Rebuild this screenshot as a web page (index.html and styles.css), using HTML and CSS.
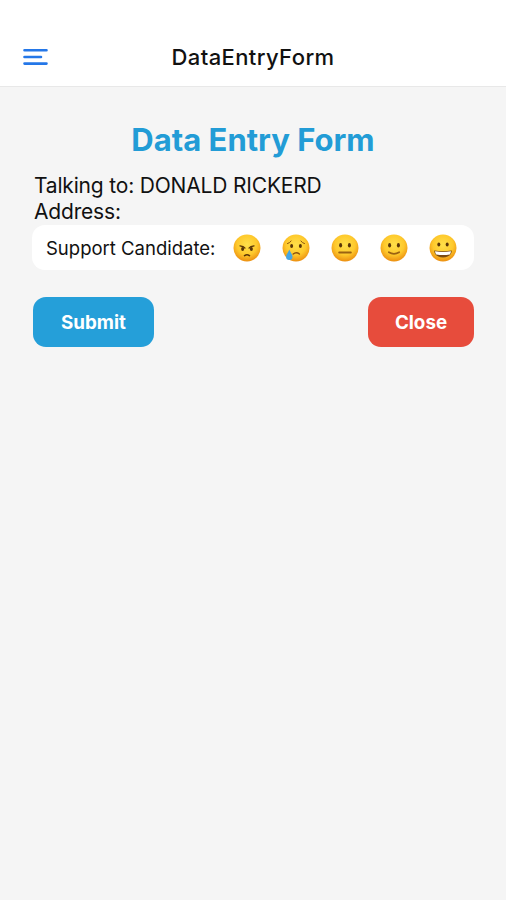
FILE: index.html
```html
<!DOCTYPE html>
<html lang="en">
<head>
    <meta charset="UTF-8">
    <title>DataEntryForm</title>
    <link rel="stylesheet" href="styles.css">
</head>
<body>
    <!-- shared gradient for the faces -->
    <svg class="defs" width="0" height="0">
        <defs>
            <radialGradient id="skin" cx="50%" cy="38%" r="62%">
                <stop offset="0" stop-color="#ffe04a"/>
                <stop offset="0.6" stop-color="#fec92c"/>
                <stop offset="1" stop-color="#ec8f10"/>
            </radialGradient>
        </defs>
    </svg>

    <header class="topbar">
        <button class="menu" aria-label="Menu">
            <svg width="25" height="18" viewBox="0 0 25 18" fill="none" stroke="#2477e8" stroke-width="2.6" stroke-linecap="round">
                <path d="M1.5 2.2h22M1.5 9h16.5M1.5 15.6h22"/>
            </svg>
        </button>
        <span class="topbar-title">DataEntryForm</span>
    </header>

    <main class="container">
        <h1>Data Entry Form</h1>
        <p class="info talking">Talking to: DONALD RICKERD</p>
        <p class="info address">Address:</p>

        <div class="support">
            <span class="support-label">Support Candidate:</span>
            <div class="faces">
                <svg class="face" viewBox="0 0 28 28">
                    <circle cx="14" cy="14" r="13.5" fill="url(#skin)"/>
                    <g fill="#5a3508">
                        <ellipse cx="9.6" cy="15" rx="1.5" ry="1.9"/>
                        <ellipse cx="18.4" cy="15" rx="1.5" ry="1.9"/>
                    </g>
                    <g fill="none" stroke="#5a3508" stroke-width="1.3" stroke-linecap="round">
                        <path d="M7 11.8q3.6.4 5 2.3M21 11.8q-3.6.4-5 2.3"/>
                        <path d="M11.6 21.6q2.4-1.7 4.8 0" stroke-width="1.7"/>
                    </g>
                </svg>
                <svg class="face" viewBox="0 0 28 28">
                    <circle cx="14" cy="14" r="13.5" fill="url(#skin)"/>
                    <g fill="#5a3508">
                        <ellipse cx="9.6" cy="12" rx="1.5" ry="2"/>
                        <ellipse cx="18.4" cy="12" rx="1.5" ry="2"/>
                    </g>
                    <g fill="none" stroke="#8a5310" stroke-width="1" stroke-linecap="round">
                        <path d="M5.5 9.6q2.4-.6 3.6-2.6M22.500 9.600q-2.400-.600-3.600-2.600"/>
                        <path d="M11.200 20q3-2.600 6.200 0" stroke-width="1.500"/>
                    </g>
                    <path d="M7.300 15.500c1 2.800 3.200 4.800 3.200 7.200a3.200 3.200 0 0 1-6.400 0c0-2.400 2.200-4.400 3.200-7.200z" fill="#45a6e6"/>
                </svg>
                <svg class="face" viewBox="0 0 28 28">
                    <circle cx="14" cy="14" r="13.5" fill="url(#skin)"/>
                    <g fill="#5a3508">
                        <ellipse cx="9.6" cy="11.2" rx="1.5" ry="2.2"/>
                        <ellipse cx="18.4" cy="11.2" rx="1.5" ry="2.2"/>
                    </g>
                    <path d="M8.2 18.5h11.6" stroke="#9a6212" stroke-width="2" stroke-linecap="round"/>
                </svg>
                <svg class="face" viewBox="0 0 28 28">
                    <circle cx="14" cy="14" r="13.5" fill="url(#skin)"/>
                    <g fill="#5a3508">
                        <ellipse cx="9.6" cy="11.2" rx="1.5" ry="2.2"/>
                        <ellipse cx="18.4" cy="11.2" rx="1.5" ry="2.2"/>
                    </g>
                    <path d="M8.800 18.200q5.200 3.200 10.400 0" fill="none" stroke="#9a6212" stroke-width="1.700" stroke-linecap="round"/>
                </svg>
                <svg class="face" viewBox="0 0 28 28">
                    <circle cx="14" cy="14" r="13.5" fill="url(#skin)"/>
                    <g fill="#5a3508">
                        <ellipse cx="9.8" cy="10.6" rx="1.5" ry="2"/>
                        <ellipse cx="18.2" cy="10.6" rx="1.5" ry="2"/>
                    </g>
                    <path d="M5.200 16.400q8.800 1.600 17.600 0c.3 4.200-3.800 7-8.800 7s-9.100-2.800-8.800-7z" fill="#7a4a12"/>
                    <path d="M6 17.200q8 1.400 16 0-.2 1.900-1.200 3.200-6.800 1-13.600 0-1-1.300-1.200-3.200z" fill="#fff"/>
                </svg>
            </div>
        </div>

        <div class="buttons">
            <button class="btn submit">Submit</button>
            <button class="btn close">Close</button>
        </div>
    </main>
</body>
</html>
```
FILE: styles.css
```css
* {
    box-sizing: border-box;
}
body {
    background-color: #f5f5f5;
    font-family: Inter, "Liberation Sans", sans-serif;
    color: #111;
    margin: 0;
    min-height: 100vh;
}
.defs {
    display: block;
}
.topbar {
    display: grid;
    grid-template-columns: 60px 1fr 60px;
    align-items: center;
    height: 87px;
    padding: 28px 0 0;
    background-color: #fff;
    border-bottom: 1px solid #e8e8e8;
}
.menu {
    display: flex;
    padding: 0 0 0 23px;
    border: none;
    background: none;
}
.topbar-title {
    text-align: center;
    font-size: 22px;
    font-weight: 500;
    letter-spacing: 0.4px;
}
.container {
    padding: 35px 32px 0;
}
h1 {
    margin: 0;
    text-align: center;
    font-size: 31px;
    line-height: 36px;
    font-weight: 700;
    color: #229cd6;
}
.info {
    margin: 0 0 0 2px;
    font-size: 21px;
    line-height: 26px;
    letter-spacing: -0.18px;
}
.talking {
    margin-top: 15px;
}
.support {
    display: flex;
    align-items: center;
    justify-content: space-between;
    height: 45px;
    padding: 0 17px 0 14px;
    background-color: #fff;
    border-radius: 13px;
}
.support-label {
    font-size: 18.5px;
}
.faces {
    display: flex;
    gap: 21px;
}
.face {
    width: 28px;
    height: 28px;
}
.buttons {
    display: flex;
    justify-content: space-between;
    margin-top: 27px;
    padding-left: 1px;
}
.btn {
    height: 50px;
    border: none;
    border-radius: 13px;
    color: #fff;
    font-family: inherit;
    font-size: 18.8px;
    font-weight: 700;
}
.submit {
    width: 121px;
    background-color: #259fd9;
}
.close {
    width: 106px;
    background-color: #e74c3c;
}
```
